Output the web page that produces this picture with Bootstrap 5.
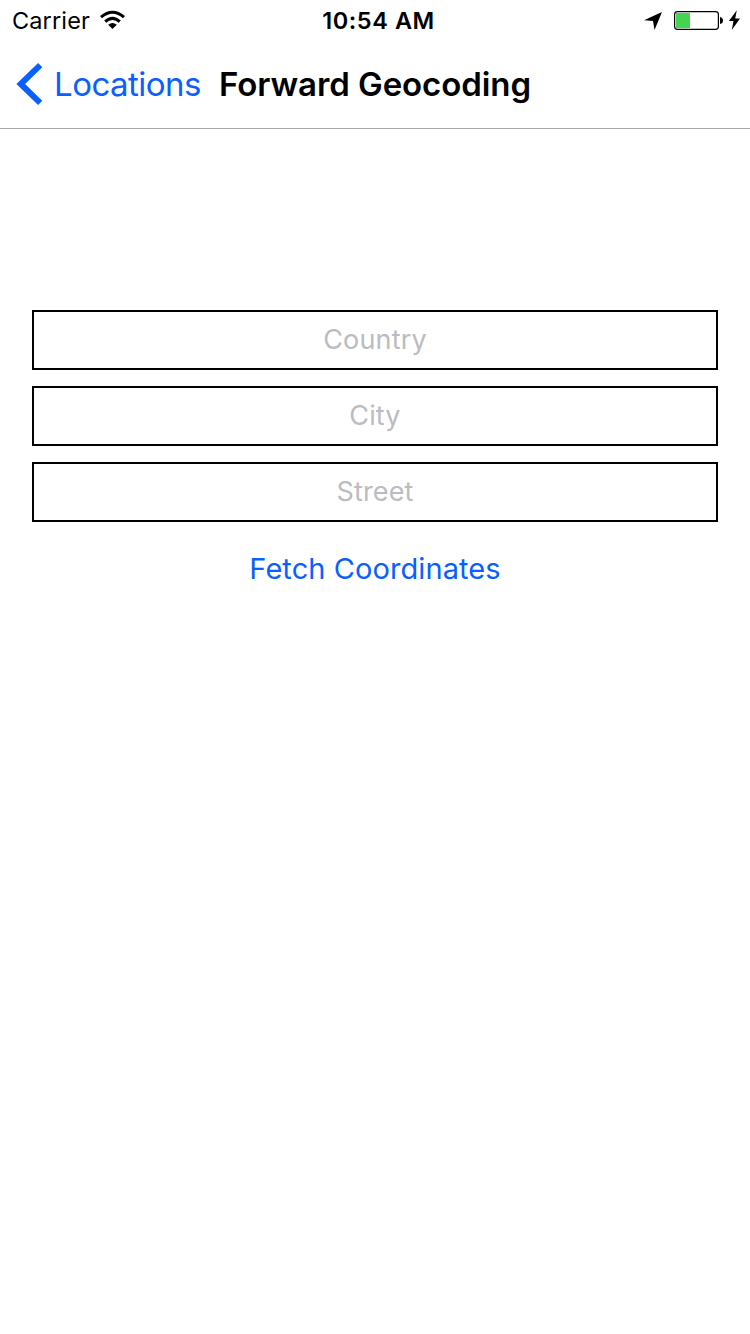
<!DOCTYPE html>
<html lang="en">
<head>
<meta charset="utf-8">
<meta name="viewport" content="width=device-width, initial-scale=1">
<title>Forward Geocoding</title>
<link href="https://cdn.jsdelivr.net/npm/bootstrap@5.3.0/dist/css/bootstrap.min.css" rel="stylesheet">
<style>
  body { font-family: Inter, "Liberation Sans", sans-serif; color: #000; background: #fff; min-height: 1334px; }
  .status-bar { height: 40px; font-size: 23.5px; line-height: 42px; }
  .status-bar svg { display: block; margin-bottom: 2px; }
  .carrier { padding-left: 12px; letter-spacing: 0.13px; }
  .status-bar .wifi { margin: 0 0 3px 10px; }
  .clock { font-weight: 600; letter-spacing: 0.58px; padding-left: 7px; }
  .status-icons { padding-right: 10px; }
  .app-nav { height: 89px; padding: 0 16px; border-bottom: 1px solid #a7a7aa; }
  .back-link { color: #0a60ff; font-size: 33px; line-height: 88px; letter-spacing: -0.52px; }
  .back-link svg { margin: 0 11px 0 0; }
  .screen-title { font-size: 33px; font-weight: 600; line-height: 88px; letter-spacing: -0.08px; margin-left: 18px; }
  .geo-form { margin-top: 181px; padding: 0 32px; gap: 16px; }
  .geo-form .form-control { height: 60px; border: 2px solid #000; padding: 0 0 1px; font-size: 27px; line-height: 55px; color: #000; letter-spacing: 0.15px; }
  .geo-form .form-control::placeholder { color: #bbbbc1; opacity: 1; }
  .fetch-btn { color: #0a60ff; font-size: 29px; line-height: 61px; letter-spacing: 0.08px; }
</style>
</head>
<body>
<header>
  <div class="status-bar row g-0 text-nowrap">
    <div class="col-4 d-flex align-items-center">
      <span class="carrier">Carrier</span>
      <svg class="wifi" width="26" height="20" viewBox="0 0 26 20" aria-hidden="true">
        <g fill="none" stroke="#000" stroke-width="3">
          <path d="M1 7.2Q12.5 -2.8 24 7.2"/><path d="M5.2 11.7Q12.5 5 19.8 11.7"/>
        </g>
        <path d="M8.2 14.7Q12.5 11.2 16.8 14.7L12.5 19Z"/>
      </svg>
    </div>
    <div class="clock col-4 text-center">10:54 AM</div>
    <div class="status-icons col-4 d-flex align-items-center justify-content-end">
      <svg width="96" height="40" viewBox="644 0 96 40" aria-hidden="true">
        <path d="M662 12L644 20.2L653 21L654.5 30Z"/>
        <rect x="674.6" y="11.6" width="43.8" height="17.8" rx="2.8" fill="#fff" stroke="#000" stroke-width="1.2"/>
        <path d="M676 13H690V28H676Z" fill="#43d551"/>
        <path d="M720 17Q723 17.5 723 20.5T720 24Z"/>
        <path d="M736.8 10.3L728.9 21H733.5L731.8 30L740 18.5H735.2Z"/>
      </svg>
    </div>
  </div>
  <nav class="app-nav d-flex align-items-center text-nowrap">
    <a href="#" class="back-link d-flex align-items-center text-decoration-none">
      <svg width="27" height="42" viewBox="0 0 27 42" aria-hidden="true"><path d="M24.2 2.2L4.7 21L24.2 39.8" fill="none" stroke="#0a60ff" stroke-width="6"/></svg>
      <span>Locations</span>
    </a>
    <h1 class="screen-title mb-0">Forward Geocoding</h1>
  </nav>
</header>
<main>
  <form class="geo-form d-flex flex-column">
    <input class="form-control rounded-0 text-center" type="text" placeholder="Country" aria-label="Country">
    <input class="form-control rounded-0 text-center" type="text" placeholder="City" aria-label="City">
    <input class="form-control rounded-0 text-center" type="text" placeholder="Street" aria-label="Street">
    <button type="button" class="fetch-btn btn border-0 p-0 align-self-center">Fetch Coordinates</button>
  </form>
</main>
<script src="https://cdn.jsdelivr.net/npm/bootstrap@5.3.0/dist/js/bootstrap.bundle.min.js"></script>
</body>
</html>
